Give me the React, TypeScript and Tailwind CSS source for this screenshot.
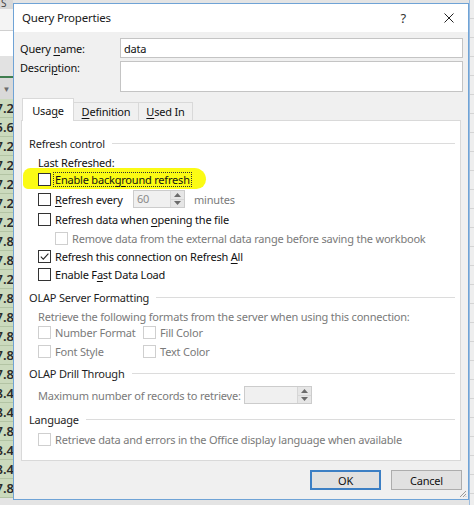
import React from 'react';

const leftCells = [
  '7.2', '5.6', '7.2', '7.2', '7.2', '7.2', '7.2', '7.8', '7.8', '7.2', '7.8',
  '7.8', '7.8', '7.8', '7.8', '8.4', '8.4', '7.8', '8.4', '8.4', '7.8',
];

const U = ({ children }: { children: React.ReactNode }) => (
  <span className="underline decoration-1 underline-offset-2">{children}</span>
);

const Box = ({ checked = false, disabled = false }: { checked?: boolean; disabled?: boolean }) => (
  <span
    className={`flex h-[13px] w-[13px] shrink-0 items-center justify-center border bg-white ${
      disabled ? 'border-[#cfcfcf]' : 'border-[#333333]'
    }`}
  >
    {checked && (
      <svg viewBox="0 0 11 11" className="h-[11px] w-[11px]">
        <path d="M1.8 5.6 L4.3 8.1 L9.4 2.6" fill="none" stroke="#262626" strokeWidth="1.1" />
      </svg>
    )}
  </span>
);

const Group = ({ title, className = '' }: { title: string; className?: string }) => (
  <div className={`flex h-[16px] items-center gap-[7px] pl-[7px] pr-[5px] text-[#1e1e1e] ${className}`}>
    <span>{title}</span>
    <span className="h-px flex-1 bg-[#dcdcdc]" />
  </div>
);

const Check = ({
  children,
  checked,
  disabled,
  className = '',
}: {
  children: React.ReactNode;
  checked?: boolean;
  disabled?: boolean;
  className?: string;
}) => (
  <div className={`flex items-center gap-[4px] ${disabled ? 'text-[#7a7a7a]' : 'text-[#111111]'} ${className}`}>
    <Box checked={checked} disabled={disabled} />
    <span>{children}</span>
  </div>
);

const Spinner = ({ value, width }: { value: string; width: string }) => (
  <div className={`flex h-[18px] ${width} border border-[#cccccc] bg-[#f0f0f0]`}>
    <span className="flex-1 pl-[3px] leading-[16px] text-[#8a8a8a]">{value}</span>
    <div className="flex w-[14px] flex-col border-l border-[#d6d6d6]">
      <span className="flex flex-1 items-center justify-center border-b border-[#d6d6d6] bg-[#e6e6e6]">
        <svg viewBox="0 0 7 4" className="h-[4px] w-[7px]"><path d="M0 4 L3.5 0 L7 4 Z" fill="#6b6b6b" /></svg>
      </span>
      <span className="flex flex-1 items-center justify-center bg-[#e6e6e6]">
        <svg viewBox="0 0 7 4" className="h-[4px] w-[7px]"><path d="M0 0 L3.5 4 L7 0 Z" fill="#6b6b6b" /></svg>
      </span>
    </div>
  </div>
);

export default function App() {
  return (
    <div className="flex h-[505px] w-[474px] overflow-hidden whitespace-nowrap bg-[#e4e4e4] font-['Noto_Sans',sans-serif] text-[11px] leading-none tracking-[-0.2px]">
      {/* Excel sheet on the left */}
      <div className="flex w-[13px] shrink-0 flex-col tracking-normal">
        <div className="h-[9px] bg-[#d8d8d8] pl-[1px] text-[10px] leading-[6px] text-[#444]">S</div>
        <div className="h-[22px] border-b border-[#d0d0d0] bg-[#f4f4f4]" />
        <div className="h-[25px] bg-white" />
        <div className="h-[20px] bg-[#e2e2e2]" />
        <div className="h-[2px] bg-[#3f7d4f]" />
        <div className="flex h-[21px] items-center justify-center bg-[#d9d9d9] text-[8px] text-[#6b6b6b]">▼</div>
        {leftCells.map((v, i) => (
          <div
            key={i}
            className="flex h-[19px] shrink-0 items-center justify-end overflow-hidden border-b border-[#b3c4a4] bg-[#cbdabd] text-[13px] font-semibold text-[#2a2a2a]"
          >
            <span className="-mr-[1px]">{v}</span>
          </div>
        ))}
      </div>

      {/* Dialog */}
      <div className="mt-[3px] flex h-[497px] w-[456px] shrink-0 flex-col border border-[#6fa3d6] bg-[#f0f0f0]">
        {/* Title bar */}
        <div className="flex h-[28px] shrink-0 items-center bg-white pl-[8px] pr-[14px] text-[11.5px] text-[#1a1a1a]">
          <span className="flex-1">Query Properties</span>
          <span className="mr-[38px] text-[13px] text-[#333]">?</span>
          <svg viewBox="0 0 10 10" className="h-[10px] w-[10px]">
            <path d="M0.5 0.5 L9.5 9.5 M9.5 0.5 L0.5 9.5" stroke="#222" strokeWidth="1" />
          </svg>
        </div>

        <div className="flex flex-1 flex-col pl-[6px] pr-[5px]">
          {/* Name + description */}
          <div className="mt-[6px] flex items-center text-[#111]">
            <span className="w-[100px] pt-[1px]">
              Query <U>n</U>ame:
            </span>
            <div className="flex h-[20px] flex-1 items-center border border-[#c4c4c4] bg-white pl-[3px]">data</div>
          </div>
          <div className="mt-[3px] flex text-[#111]">
            <span className="w-[100px] pt-[1px]">
              Descri<U>p</U>tion:
            </span>
            <div className="h-[31px] flex-1 border border-[#c4c4c4] bg-white" />
          </div>

          {/* Tabs */}
          <div className="ml-[1px] mt-[6px] flex items-end pl-[1px] text-[#111]">
            <div className="relative z-10 -mb-px flex h-[23px] w-[52px] items-center justify-center border border-b-0 border-[#d9d9d9] bg-white">
              Usa<U>g</U>e
            </div>
            <div className="flex h-[18px] w-[65px] items-center justify-center border border-b-0 border-l-0 border-[#d9d9d9] bg-[#f0f0f0]">
              <U>D</U>efinition
            </div>
            <div className="flex h-[18px] w-[54px] items-center justify-center border border-b-0 border-l-0 border-[#d9d9d9] bg-[#f0f0f0]">
              <U>U</U>sed In
            </div>
          </div>

          {/* Tab panel */}
          <div className="ml-[1px] flex h-[341px] w-[440px] flex-col border border-[#d9d9d9] bg-white pt-[14px]">
            <Group title="Refresh control" />
            <div className="mt-[3px] flex h-[16px] items-center pl-[16px] text-[#111]">Last Refreshed:</div>
            <div className="relative mt-[1px] flex h-[16px] items-center pl-[16px]">
              <div className="absolute left-[1px] top-[-3px] h-[21px] w-[183px] rounded-[8px_12px_10px_5px] bg-[#fbfb14]" />
              <div className="relative flex items-center gap-[2px] text-[#111]">
                <Box />
                <span className="border border-dotted border-[#333] px-[1px] py-[1px]">
                  Enable backg<U>r</U>ound refresh
                </span>
              </div>
            </div>
            <div className="mt-[4px] flex h-[16px] items-center pl-[16px]">
              <Check className="w-[95px]">
                <U>R</U>efresh every
              </Check>
              <Spinner value="60" width="w-[52px]" />
              <span className="ml-[9px] text-[#7a7a7a]">minutes</span>
            </div>
            <Check className="mt-[4px] h-[16px] pl-[16px]">
              Refresh data when <U>o</U>pening the file
            </Check>
            <Check disabled className="mt-[3px] h-[16px] pl-[33px]">
              Remove data from the external data range before saving the workbook
            </Check>
            <Check checked className="mt-[2px] h-[16px] pl-[16px]">
              Refresh this connection on Refresh <U>A</U>ll
            </Check>
            <Check className="mt-[2px] h-[16px] pl-[16px]">
              Enable F<U>a</U>st Data Load
            </Check>

            <Group title="OLAP Server Formatting" className="mt-[7px]" />
            <div className="mt-[3px] flex h-[16px] items-center pl-[16px] text-[#7a7a7a]">
              Retrieve the following formats from the server when using this connection:
            </div>
            <div className="flex h-[16px] items-center pl-[16px]">
              <Check disabled className="w-[105px]">Number Format</Check>
              <Check disabled>Fill Color</Check>
            </div>
            <div className="mt-[3px] flex h-[16px] items-center pl-[16px]">
              <Check disabled className="w-[105px]">Font Style</Check>
              <Check disabled>Text Color</Check>
            </div>

            <Group title="OLAP Drill Through" className="mt-[6px]" />
            <div className="mt-[6px] flex h-[16px] items-center pl-[16px] text-[#7a7a7a]">
              <span className="w-[206px]">Maximum number of records to retrieve:</span>
              <Spinner value="" width="w-[68px]" />
            </div>

            <Group title="Language" className="mt-[8px]" />
            <Check disabled className="mt-[4px] h-[16px] pl-[16px]">
              Retrieve data and errors in the Office display language when available
            </Check>
          </div>

          {/* Buttons */}
          <div className="mt-[9px] flex justify-end gap-[10px] pr-[1px] text-[#111]">
            <button className="flex h-[20px] w-[71px] items-center justify-center border-2 border-[#3c7fc4] bg-[#e1e1e1]">
              OK
            </button>
            <button className="flex h-[20px] w-[71px] items-center justify-center border border-[#adadad] bg-[#e1e1e1]">
              Cancel
            </button>
          </div>
          <div className="flex flex-1 items-end justify-end pb-[1px]">
            <svg viewBox="0 0 8 8" className="-mr-[4px] h-[8px] w-[8px]">
              <path d="M7 1 L1 7 M7 4 L4 7 M7 6.5 L6.5 7" stroke="#9a9a9a" strokeWidth="1" />
            </svg>
          </div>
        </div>
      </div>

      {/* Excel sheet on the right */}
      <div className="flex flex-1 flex-col border-l border-[#9cbde0] bg-[#eeeeee]">
        {Array.from({ length: 27 }).map((_, i) => (
          <div key={i} className="h-[19px] shrink-0 border-b border-[#d4d4d4]" />
        ))}
      </div>
    </div>
  );
}
